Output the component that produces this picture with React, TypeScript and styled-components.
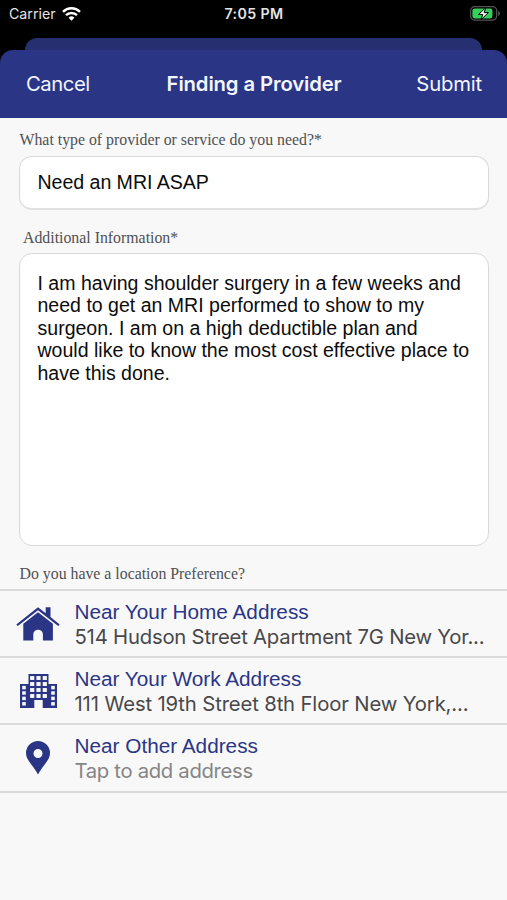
import React from "react";
import styled, { createGlobalStyle } from "styled-components";

const navy = "#2a3585";
const surface = "#f8f8f9";
const sf = 'Inter, "Liberation Sans", sans-serif';
const helvetica = '"Liberation Sans", Arial, sans-serif';
const times = '"Liberation Serif", "Times New Roman", serif';

const GlobalStyle = createGlobalStyle`
  * { box-sizing: border-box; }
  html, body { margin: 0; padding: 0; background: ${surface}; }
  button, input, textarea { font: inherit; color: inherit; }
`;

const Screen = styled.div`
  width: 507px;
  height: 900px;
  overflow: hidden;
  background: ${surface};
  font-family: ${sf};
`;

const Chrome = styled.div`
  height: 118px;
  background: #000;
  display: flex;
  flex-direction: column;
`;

const StatusBar = styled.div`
  height: 38px;
  padding: 0 6px 11px 9px;
  display: grid;
  grid-template-columns: 1fr auto 1fr;
  align-items: center;
  color: #e4e4e4;
  font-size: 14.2px;
  line-height: 18px;
`;

const Carrier = styled.div`
  display: flex;
  align-items: center;
  gap: 6px;
`;

const Clock = styled.div`
  font-weight: 600;
  letter-spacing: 0.4px;
  padding-right: 2px;
`;

const BatterySlot = styled.div`
  display: flex;
  justify-content: flex-end;
`;

const SheetBehind = styled.div`
  height: 12px;
  margin: 0 25px;
  border-radius: 12px 12px 0 0;
  background: #262f70;
`;

const NavBar = styled.header`
  height: 68px;
  padding: 0 25px 0 26px;
  border-radius: 13px 13px 0 0;
  background: ${navy};
  display: flex;
  align-items: center;
  justify-content: space-between;
  color: #f3f5ff;
`;

const NavButton = styled.button<{ $tracking: number }>`
  border: 0;
  padding: 0;
  background: none;
  font-size: 20.3px;
  line-height: 26px;
  letter-spacing: ${(p) => p.$tracking}px;
`;

const NavTitle = styled.h1`
  margin: 0;
  padding-left: 2px;
  font-size: 20.3px;
  line-height: 26px;
  font-weight: 600;
  letter-spacing: -0.12px;
`;

const Form = styled.main`
  display: flex;
  flex-direction: column;
`;

const Label = styled.label<{ $top: number; $left?: number }>`
  margin: ${(p) => p.$top}px 0 0 ${(p) => p.$left ?? 19.5}px;
  font-family: ${times};
  font-size: 15.83px;
  line-height: 20px;
  height: 20px;
  color: #505052;
`;

const field = `
  display: block;
  width: 470px;
  margin: 0 0 0 19px;
  border: 1px solid #d9d9d9;
  border-radius: 13px;
  background: #fff;
  color: #0c0c0c;
  font-family: ${helvetica};
  outline: none;
  resize: none;
`;

const TextInput = styled.input`
  ${field}
  height: 54px;
  padding: 0 17.5px 1px;
  font-size: 19.6px;
  letter-spacing: -0.05px;
  margin-top: 6px;
  border-bottom: 2px solid #e0e0e0;
`;

const TextArea = styled.textarea`
  ${field}
  height: 293px;
  padding: 18px 10px 0 17.5px;
  margin-top: 5px;
  font-size: 19.55px;
  line-height: 22.4px;
  overflow: hidden;
`;

const LocationList = styled.ul`
  list-style: none;
  margin: 5px 0 0;
  padding: 0;
  border-top: 2px solid #dadada;
`;

const LocationRow = styled.li`
  height: 67.2px;
  border-bottom: 2px solid #dadada;
  display: grid;
  grid-template-columns: 74.5px 1fr;
  align-items: center;
`;

const IconCell = styled.div`
  display: flex;
  justify-content: center;
  padding-left: 1.5px;
`;

const RowText = styled.div`
  min-width: 0;
`;

const RowTitle = styled.div`
  font-family: ${helvetica};
  font-size: 20.75px;
  line-height: 25px;
  color: ${navy};
  white-space: nowrap;
`;

const RowDetail = styled.div<{ $muted?: boolean; $tracking: number }>`
  font-size: 20.3px;
  line-height: 25px;
  letter-spacing: ${(p) => p.$tracking}px;
  color: ${(p) => (p.$muted ? "#858585" : "#48484a")};
  white-space: nowrap;
`;

const WifiIcon = () => (
  <svg width="19" height="14" viewBox="0 0 19 14" fill="none" stroke="#fff" strokeWidth="2.5">
    <path d="M1 4.8a12.2 12.2 0 0 1 17 0" />
    <path d="M4 8.2a7.8 7.8 0 0 1 11 0" />
    <path d="M9.5 13.7 6.6 10.8a4.1 4.1 0 0 1 5.8 0z" fill="#fff" stroke="none" />
  </svg>
);

const BatteryIcon = () => (
  <svg width="31" height="15" viewBox="0 0 31 15">
    <rect x="0.7" y="0.7" width="26" height="13.4" rx="4" fill="none" stroke="#555" strokeWidth="1.2" />
    <path d="M28.2 5v5c1.1-.4 1.8-1.3 1.8-2.5S29.3 5.4 28.2 5z" fill="#555" />
    <rect x="2.4" y="2.4" width="20" height="10" rx="2.3" fill="#35cf5c" />
    <path d="M15.8 1.6 8.6 8.4h4.2l-1.7 5.2 7.3-7h-4.3z" fill="#fff" stroke="#000" strokeWidth="1" />
  </svg>
);

const HomeIcon = () => (
  <svg width="44" height="34" viewBox="0 0 44 34" fill={navy}>
    <path d="M22 .3.3 17.5l1.5 1.5L22 3.2l20.2 15.8 1.5-1.5L34.5 10V.3h-4.8v6z" />
    <path d="M22 5.2 7.3 16.7V33.5h10V27.5a4.8 4.8 0 0 1 9.6 0v6h10V16.7z" />
  </svg>
);

const paneGrid = (xs: number[], ys: number[], w: number, h: number) =>
  xs.flatMap((x) =>
    ys.map((y) => <rect key={`${x}-${y}`} x={x - w / 2} y={y - h / 2} width={w} height={h} fill={surface} />)
  );

const OfficeIcon = () => (
  <svg width="37" height="34" viewBox="0 0 37 34">
    <path d="M0 10h8.5V0h20v10H37v24H0z" fill={navy} />
    {paneGrid([12.2, 18.5, 24.8], [4, 10, 16, 22], 4.2, 3.9)}
    {paneGrid([4, 33], [13.6, 19, 24.4, 29.8], 3.6, 3.5)}
    <path d="M14.3 26h8.4v8h-8.4z" fill={surface} />
  </svg>
);

const PinIcon = () => (
  <svg width="24" height="34" viewBox="0 0 24 34">
    <path
      d="M12 0A12 12 0 0 0 0 12c0 7.5 7.5 12.5 12 21.5C16.5 24.5 24 19.5 24 12A12 12 0 0 0 12 0zm0 8a4.5 4.5 0 1 1 0 9 4.5 4.5 0 0 1 0-9z"
      fill={navy}
    />
  </svg>
);

const locations = [
  { title: "Near Your Home Address", detail: "514 Hudson Street Apartment 7G New Yor...", Icon: HomeIcon, tracking: -0.21 },
  { title: "Near Your Work Address", detail: "111 West 19th Street 8th Floor New York,...", Icon: OfficeIcon, tracking: -0.14 },
  { title: "Near Other Address", detail: "Tap to add address", Icon: PinIcon, tracking: -0.32, muted: true },
];

const additionalInfo = [
  "I am having shoulder surgery in a few weeks and",
  "need to get an MRI performed to show to my",
  "surgeon. I am on a high deductible plan and",
  "would like to know the most cost effective place to",
  "have this done.",
].join("\n");

export default function App() {
  return (
    <Screen>
      <GlobalStyle />
      <Chrome>
        <StatusBar>
          <Carrier>
            Carrier <WifiIcon />
          </Carrier>
          <Clock>7:05 PM</Clock>
          <BatterySlot>
            <BatteryIcon />
          </BatterySlot>
        </StatusBar>
        <SheetBehind />
        <NavBar>
          <NavButton $tracking={-0.45}>Cancel</NavButton>
          <NavTitle>Finding a Provider</NavTitle>
          <NavButton $tracking={-0.18}>Submit</NavButton>
        </NavBar>
      </Chrome>
      <Form>
        <Label $top={12} htmlFor="service">What type of provider or service do you need?*</Label>
        <TextInput id="service" defaultValue="Need an MRI ASAP" />
        <Label $top={18} $left={23} htmlFor="info">Additional Information*</Label>
        <TextArea id="info" spellCheck={false} defaultValue={additionalInfo} />
        <Label as="div" $top={18}>Do you have a location Preference?</Label>
        <LocationList>
          {locations.map(({ title, detail, Icon, tracking, muted }) => (
            <LocationRow key={title}>
              <IconCell>
                <Icon />
              </IconCell>
              <RowText>
                <RowTitle>{title}</RowTitle>
                <RowDetail $muted={muted} $tracking={tracking}>{detail}</RowDetail>
              </RowText>
            </LocationRow>
          ))}
        </LocationList>
      </Form>
    </Screen>
  );
}
